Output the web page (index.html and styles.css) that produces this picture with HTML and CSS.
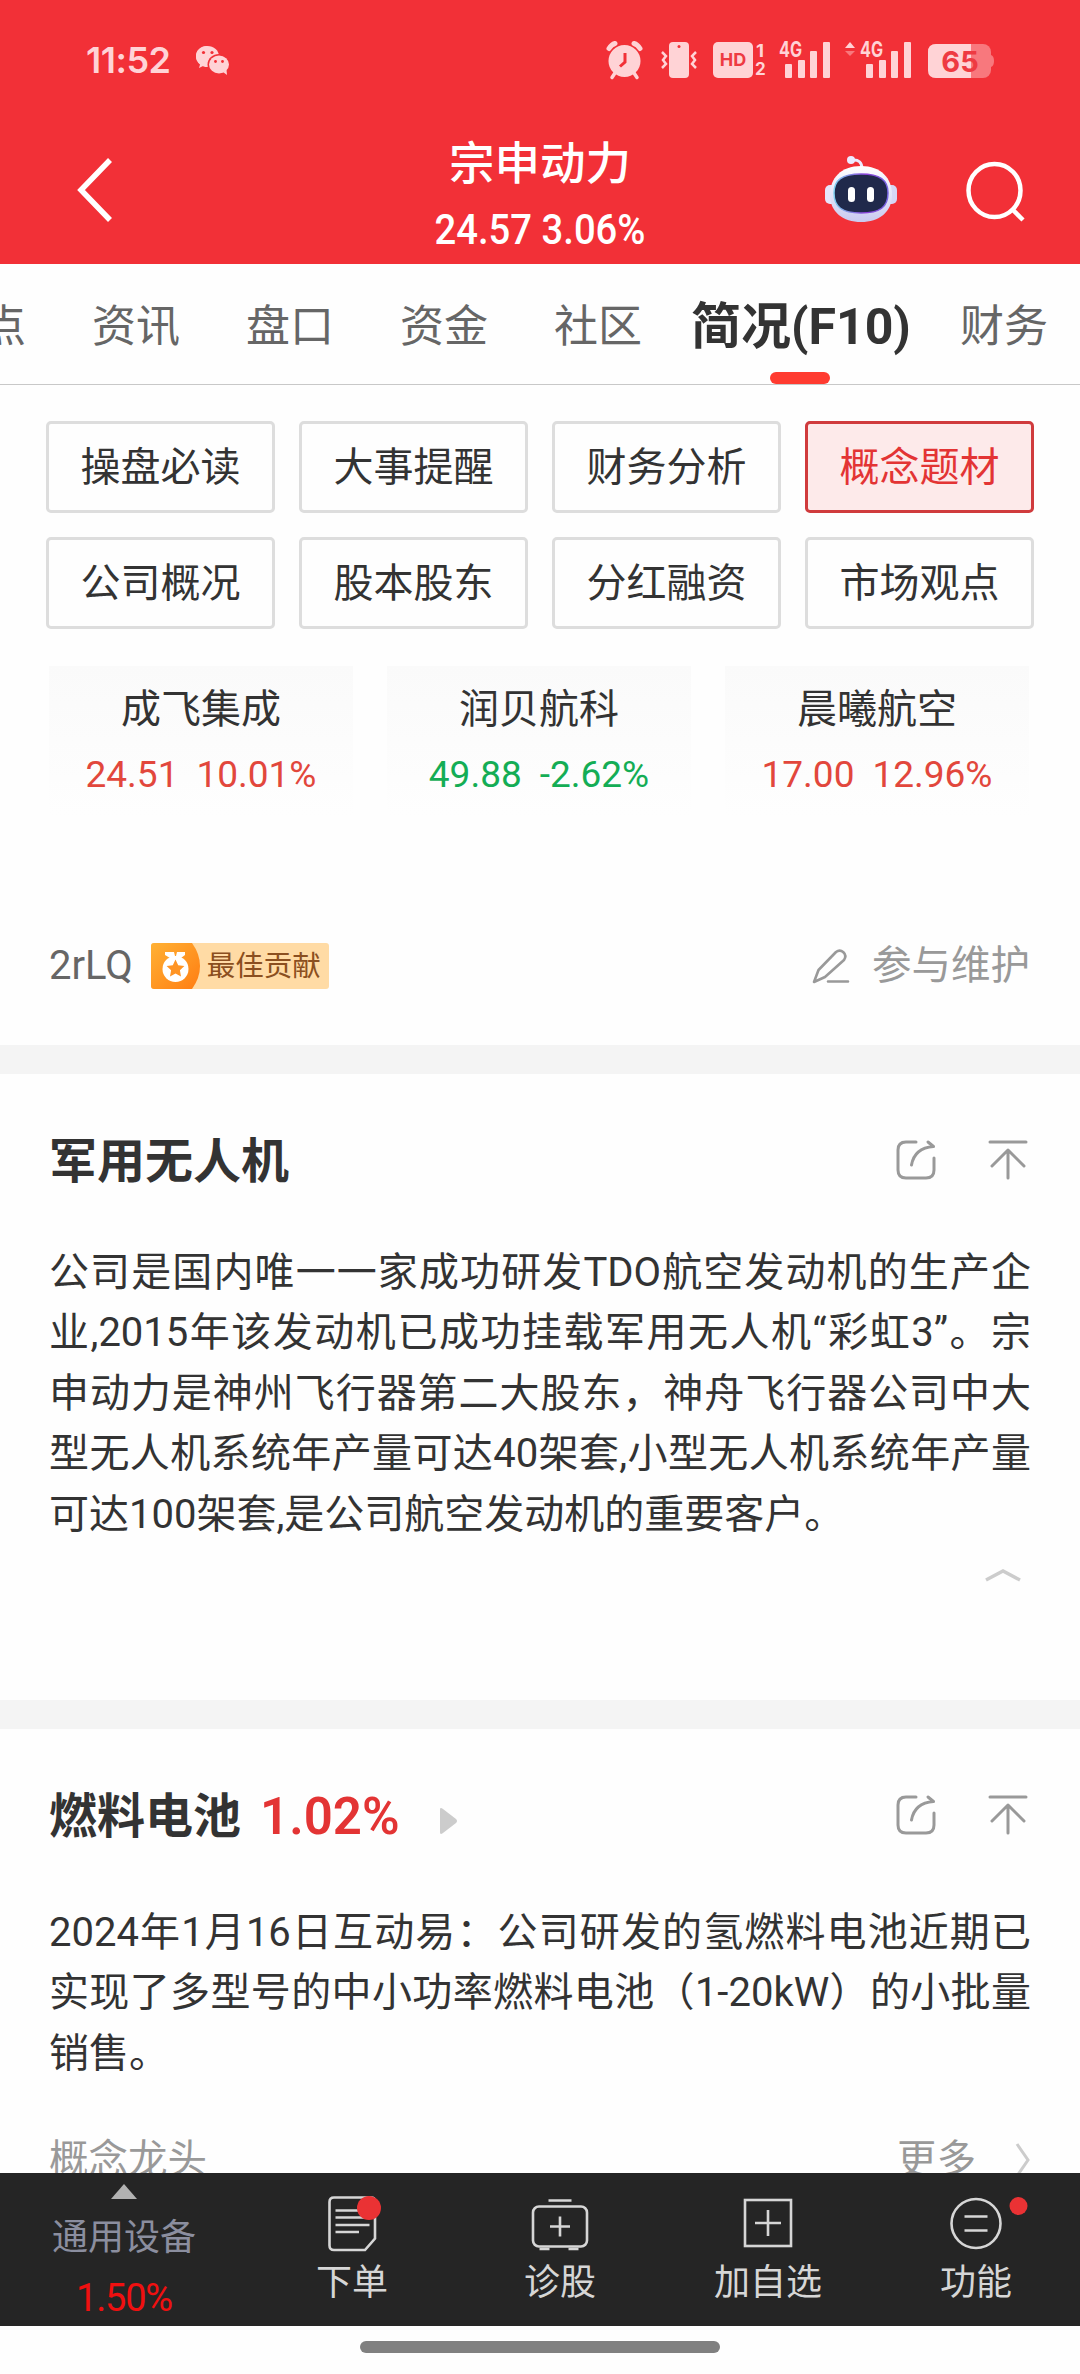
FILE: index.html
```html
<!DOCTYPE html>
<html lang="zh-CN">
<head>
    <meta charset="UTF-8">
    <meta name="viewport" content="width=device-width, initial-scale=1.0">
    <title>宗申动力 - 简况(F10)</title>
    <link rel="stylesheet" href="styles.css">
</head>
<body>
    <header>
        <div class="status-bar">
            <span class="time">11:52</span>
            <svg class="wechat" width="36" height="32" viewBox="0 0 36 32">
                <path d="M12 1C5.500 1 1 5.500 1 11c0 3.200 1.600 6 4.200 8L4 23l5-2.500 4 .7" fill="#ffd3d6"/>
                <ellipse cx="12.500" cy="11.500" rx="11.500" ry="10.500" fill="#ffd3d6"/>
                <ellipse cx="24" cy="19.500" rx="11.500" ry="10.500" fill="#f23037"/>
                <path d="M28 27l4 3-.5-5z" fill="#ffd3d6"/>
                <ellipse cx="24" cy="19.500" rx="10" ry="9" fill="#ffd3d6"/>
                <g fill="#f23037">
                    <circle cx="8.500" cy="7.500" r="1.600"/><circle cx="17" cy="7.500" r="1.600"/>
                    <circle cx="20.500" cy="16.500" r="1.400"/><circle cx="27.500" cy="16.500" r="1.400"/>
                </g>
            </svg>
            <svg class="status-icons" width="390" height="60" viewBox="606 30 390 60">
                <!-- alarm -->
                <g stroke="#ffd3d6" fill="none" stroke-linecap="round">
                    <path d="M609 48.500q2.500-4 6-5M640 48.500q-2.500-4-6-5" stroke-width="5"/>
                    <path d="M615 73l-3 4.500M634 73l3 4.500" stroke-width="3.500"/>
                </g>
                <circle cx="624.500" cy="61" r="16" fill="#ffd3d6"/>
                <path d="M625 53v9l-5 4.500" stroke="#f23037" stroke-width="3" fill="none"/>
                <!-- vibrate -->
                <rect x="669" y="42" width="20" height="36" rx="4" fill="#ffd3d6"/>
                <circle cx="679" cy="46.500" r="1.500" fill="#f23037"/>
                <path d="M662 52l4 4-3 4 3 4-4 4M696 52l-4 4 3 4-3 4 4 4" stroke="#ffd3d6" stroke-width="2.500" fill="none"/>
                <!-- hd -->
                <rect x="713" y="42" width="40" height="36" rx="5" fill="#ffd3d6"/>
                <text x="733" y="66" font-size="18" text-anchor="middle" class="on-light">HD</text>
                <text x="756" y="57" font-size="17" class="light" textLength="8" lengthAdjust="spacingAndGlyphs">1</text>
                <text x="755" y="75" font-size="17" class="light">2</text>
                <!-- signal -->
                <text x="779" y="57" font-size="21" class="light" textLength="23" lengthAdjust="spacingAndGlyphs">4G</text>
                <g fill="#ffd3d6">
                    <rect x="785" y="64" width="7" height="14" rx="1"/><rect x="798" y="60" width="7" height="18" rx="1"/>
                    <rect x="810" y="51" width="7" height="27" rx="1"/><rect x="823" y="42" width="7" height="36" rx="1"/>
                    <path d="M845 48l5-6 5 6z"/>
                </g>
                <path d="M845 51l5 5 5-5z" fill="#f8787d"/>
                <text x="860" y="57" font-size="21" class="light" textLength="23" lengthAdjust="spacingAndGlyphs">4G</text>
                <g fill="#ffd3d6">
                    <rect x="866" y="64" width="7" height="14" rx="1"/><rect x="879" y="60" width="7" height="18" rx="1"/>
                    <rect x="891" y="51" width="7" height="27" rx="1"/><rect x="904" y="42" width="7" height="36" rx="1"/>
                </g>
                <!-- battery -->
                <rect x="928" y="44" width="63" height="34" rx="8" fill="#f8787d"/>
                <path d="M991 55q3 1 3 6t-3 6z" fill="#f8787d"/>
                <path d="M971 44h-35q-8 0-8 8v18q0 8 8 8h35z" fill="#ffd3d6"/>
                <text x="960" y="72" font-size="29" text-anchor="middle" class="on-light">65</text>
            </svg>
        </div>
        <div class="title-bar">
            <svg class="back" width="40" height="68" viewBox="0 0 40 68"><path d="M35 4L6 34l29 30" fill="none" stroke="#fff" stroke-width="5.500"/></svg>
            <div class="stock">
                <h1>宗申动力</h1>
                <p>24.57 3.06%</p>
            </div>
            <svg class="robot" width="74" height="70" viewBox="0 0 74 70">
                <defs>
                    <linearGradient id="head" x1="0" y1="0" x2="0" y2="1">
                        <stop offset="0" stop-color="#fff"/><stop offset="1" stop-color="#c9caf0"/>
                    </linearGradient>
                    <linearGradient id="rim" x1="0" y1="0" x2="1" y2="0">
                        <stop offset="0" stop-color="#7fd0f0"/><stop offset=".6" stop-color="#8a3fd8"/><stop offset="1" stop-color="#7565e0"/>
                    </linearGradient>
                </defs>
                <path d="M28 6q10-1 10 9" fill="none" stroke="#eceaff" stroke-width="3"/>
                <circle cx="27" cy="6" r="4" fill="#eceaff"/>
                <rect x="1" y="31" width="12" height="19" rx="5" fill="#e6e5fb"/>
                <rect x="61" y="31" width="12" height="19" rx="5" fill="#d6d6f5"/>
                <path d="M37 12c20 0 31 12 31 29S55 68 37 68 6 58 6 41s11-29 31-29z" fill="url(#head)"/>
                <path d="M37 20c19 0 27 6 27 19 0 14-8 20-27 20s-27-6-27-20c0-13 8-19 27-19z" fill="#20294b" stroke="url(#rim)" stroke-width="1.500"/>
                <rect x="24" y="33" width="7" height="15" rx="3.500" fill="#fff"/>
                <rect x="43" y="33" width="7" height="15" rx="3.500" fill="#fff"/>
            </svg>
            <svg class="search" width="64" height="64" viewBox="0 0 64 64">
                <ellipse cx="31.500" cy="31.500" rx="26" ry="26.500" fill="none" stroke="#fff" stroke-width="4.500"/>
                <path d="M49 50l11 11" stroke="#fff" stroke-width="4.500"/>
            </svg>
        </div>
    </header>

    <nav class="tabs">
        <a>看点</a>
        <a>资讯</a>
        <a>盘口</a>
        <a>资金</a>
        <a>社区</a>
        <a class="active">简况(F10)</a>
        <a>财务</a>
    </nav>

    <main>
        <div class="menu">
            <a>操盘必读</a>
            <a>大事提醒</a>
            <a>财务分析</a>
            <a class="active">概念题材</a>
            <a>公司概况</a>
            <a>股本股东</a>
            <a>分红融资</a>
            <a>市场观点</a>
        </div>

        <div class="leaders">
            <div class="leader up">
                <h3>成飞集成</h3>
                <p><span>24.51</span><span>10.01%</span></p>
            </div>
            <div class="leader down">
                <h3>润贝航科</h3>
                <p><span>49.88</span><span>-2.62%</span></p>
            </div>
            <div class="leader up">
                <h3>晨曦航空</h3>
                <p><span>17.00</span><span>12.96%</span></p>
            </div>
        </div>

        <div class="contributor">
            <span class="user">2rLQ</span>
            <div class="badge">
                <svg width="50" height="46" viewBox="0 0 50 46">
                    <defs>
                        <linearGradient id="medal" x1="0" y1="0" x2="1" y2="1">
                            <stop offset="0" stop-color="#ffb134"/><stop offset="1" stop-color="#ff7d12"/>
                        </linearGradient>
                    </defs>
                    <path d="M0 0h41q8 11 8 23t-8 23H0z" fill="url(#medal)"/>
                    <path d="M14 9h9l1 4h1l1-4h8v3l-4 3H19l-5-3z" fill="#fff"/>
                    <circle cx="24.500" cy="26" r="13" fill="#fff"/>
                    <path d="M24.500 16.500l2.700 5.700 6.200.8-4.500 4.300 1.100 6.200-5.500-3-5.500 3 1.100-6.200-4.500-4.300 6.200-.8z" fill="#ff9424"/>
                </svg>
                <span>最佳贡献</span>
            </div>
            <div class="maintain">
                <svg width="40" height="38" viewBox="0 0 40 38" fill="none" stroke="#999" stroke-width="2.600" stroke-linecap="round" stroke-linejoin="round">
                    <path d="M3 35L7.500 23 25 5c5-4 12 2 8 8L14 30zM17 34.500h20"/>
                </svg>
                <span>参与维护</span>
            </div>
        </div>

        <section>
            <div class="section-head">
                <h2>军用无人机</h2>
                <svg class="share" width="42" height="42" viewBox="0 0 42 42"><path d="M21 3h-10q-8 0-8 8v20q0 8 8 8h20q8 0 8-8v-12M16.500 26q3-17 22-18.500M33 3l5.500 4.500" /></svg>
                <svg class="to-top" width="42" height="42" viewBox="0 0 42 42"><path d="M3 3h36M21 39V11M5 27l16-16 16 16"/></svg>
            </div>
            <p class="text">公司是国内唯一一家成功研发TDO航空发动机的生产企<br>业,2015年该发动机已成功挂载军用无人机“彩虹3”。宗<br>申动力是神州飞行器第二大股东，神舟飞行器公司中大<br>型无人机系统年产量可达40架套,小型无人机系统年产量</p>
            <p class="text last">可达100架套,是公司航空发动机的重要客户。</p>
            <svg class="collapse" width="40" height="18" viewBox="0 0 40 18"><path d="M3 14L20 5l17 9" fill="none" stroke="#ccc" stroke-width="3.500"/></svg>
        </section>

        <section>
            <div class="section-head">
                <h2>燃料电池</h2>
                <span class="change">1.02%</span>
                <svg class="play" width="18" height="26" viewBox="0 0 18 26"><path d="M0 1.500Q0-1 3 1l13 10q2 2 0 4L3 25q-3 2-3-.5z" fill="#ccc"/></svg>
                <svg class="share" width="42" height="42" viewBox="0 0 42 42"><path d="M21 3h-10q-8 0-8 8v20q0 8 8 8h20q8 0 8-8v-12M16.500 26q3-17 22-18.500M33 3l5.500 4.500" /></svg>
                <svg class="to-top" width="42" height="42" viewBox="0 0 42 42"><path d="M3 3h36M21 39V11M5 27l16-16 16 16"/></svg>
            </div>
            <p class="text">2024年1月16日互动易：公司研发的氢燃料电池近期已<br>实现了多型号的中小功率燃料电池（1-20kW）的小批量</p>
            <p class="text last">销售。</p>
            <div class="more">
                <span>概念龙头</span>
                <span class="link">更多</span>
                <svg width="16" height="36" viewBox="0 0 16 36"><path d="M2 2l11 16L2 34" fill="none" stroke="#ccc" stroke-width="3"/></svg>
            </div>
        </section>
    </main>

    <footer>
        <div class="industry">
            <svg width="26" height="15" viewBox="0 0 26 15"><path d="M13 0l13 15H0z" fill="#b2b2b2"/></svg>
            <span>通用设备</span>
            <b>1.50%</b>
        </div>
        <a>
            <svg width="60" height="60" viewBox="322 2193 60 60">
                <path d="M334 2197.500h37q4 0 4 4v37l-10 11.500h-31q-4.500 0-4.500-4.500v-43.500q0-4.500 4.500-4.500z"/>
                <path d="M335.500 2210.500h33M335.500 2217.500h33M335.500 2225h34M335.500 2232h23.500"/>
                <circle class="dot" cx="369" cy="2208" r="12"/>
            </svg>
            下单
        </a>
        <a>
            <svg width="60" height="60" viewBox="529.500 2193 60 60">
                <rect x="532.500" y="2206.500" width="54" height="40" rx="6"/>
                <path d="M548 2200.500h23M549.500 2226.500h20M559.500 2216.500v20M539 2249h10M568 2249h10"/>
            </svg>
            诊股
        </a>
        <a>
            <svg width="60" height="60" viewBox="737 2193 60 60">
                <rect x="744" y="2200" width="46" height="46"/>
                <path d="M754 2223h26M767 2210v26"/>
            </svg>
            加自选
        </a>
        <a>
            <svg width="60" height="60" viewBox="945.500 2193 60 60">
                <circle cx="975.500" cy="2223.500" r="24.500"/>
                <path d="M964 2216.500h23M964 2230.500h23"/>
                <circle class="dot" cx="1018" cy="2206" r="9"/>
            </svg>
            功能
        </a>
    </footer>
    <div class="home-bar"><i></i></div>
</body>
</html>
```
FILE: styles.css
```css
* {
    box-sizing: border-box;
}
body {
    margin: 0;
    height: 2374px;
    display: flex;
    flex-direction: column;
    overflow: hidden;
    background-color: #fefefe;
    color: #333;
    font-family: Roboto, "Noto Sans CJK SC", sans-serif;
    font-size: 40px;
}
h1, h2, h3, p {
    margin: 0;
}
svg {
    display: block;
    flex: none;
}

/* Header */
header {
    height: 264px;
    flex: none;
    background-color: #f23037;
    color: #fff;
}
.status-bar {
    display: flex;
    align-items: center;
    height: 120px;
    padding: 0 84px 0 86px;
}
.time {
    width: 109px;
    font: 600 36px/40px Inter, sans-serif;
    letter-spacing: -0.5px;
    color: #ffd3d6;
}
.wechat {
    margin-top: 2px;
}
.status-icons {
    margin-left: auto;
}
.status-icons text {
    font-family: Inter, sans-serif;
    font-weight: 700;
}
.light {
    fill: #ffd3d6;
}
.on-light {
    fill: #ee3a42;
}
.title-bar {
    display: flex;
    align-items: flex-start;
    padding: 0 53px 0 75px;
}
.back {
    margin-top: 36px;
}
.stock {
    width: 400px;
    margin-left: 225px;
    margin-right: 84px;
    margin-top: 15px;
    text-align: center;
    white-space: nowrap;
}
.stock h1 {
    font-size: 45.500px;
    line-height: 60px;
    font-weight: 500;
}
.stock p {
    font-size: 42px;
    line-height: 50px;
    margin-top: 10px;
    font-weight: 500;
    transform: scaleX(0.91);
}
.robot {
    margin-top: 34px;
}
.search {
    margin-top: 39px;
    margin-left: auto;
}

/* Tabs */
.tabs {
    display: flex;
    flex: none;
    gap: 66px;
    height: 121px;
    margin-left: -62px;
    width: 1142px;
    border-bottom: 1px solid #c8c8c8;
    overflow: hidden;
}
.tabs a {
    flex: none;
    font-size: 44px;
    line-height: 126px;
    color: #666;
}
.tabs .active {
    position: relative;
    width: 226px;
    margin: 0 -20px;
    text-align: center;
    font-size: 50px;
    font-weight: 700;
    color: #333;
    white-space: nowrap;
}
.tabs .active::after {
    content: "";
    position: absolute;
    left: 82px;
    bottom: 0;
    width: 60px;
    height: 12px;
    border-radius: 6px;
    background-color: #ff3b30;
}

/* Content */
main {
    flex: 1;
    min-height: 0;
    overflow: hidden;
}
.menu {
    display: grid;
    grid-template-columns: repeat(4, 229px);
    gap: 24px;
    padding: 36px 46px 0;
}
.menu a {
    height: 92px;
    border: 3px solid #ddd;
    border-radius: 5px;
    line-height: 87px;
    text-align: center;
}
.menu .active {
    border-color: #d03b3d;
    background-color: #fdeaea;
    color: #e33434;
}
.leaders {
    display: grid;
    grid-template-columns: repeat(3, 304px);
    gap: 34px;
    padding: 37px 49px 0;
}
.leader {
    height: 150px;
    padding-top: 14px;
    text-align: center;
    background: linear-gradient(#fafafa, #fefefe);
}
.leader h3 {
    font-size: 40px;
    font-weight: 400;
    line-height: 60px;
}
.leader p {
    display: flex;
    justify-content: center;
    gap: 18px;
    margin-top: 10px;
    font-size: 37px;
    line-height: 50px;
    color: #e2473c;
}
.leader.down p {
    color: #14ad55;
}
.contributor {
    display: flex;
    align-items: center;
    height: 70px;
    margin-top: 115px;
    padding: 0 51px 0 49px;
    font-size: 40px;
    color: #666;
}
.user {
    margin-top: -2px;
}
.badge {
    display: flex;
    align-items: center;
    width: 178px;
    height: 46px;
    margin-left: 18px;
    border-radius: 3px;
    overflow: hidden;
    background-color: #ffdba5;
    color: #8b4f20;
    font-size: 28.500px;
    line-height: 48px;
}
.badge span {
    margin-left: 6px;
    padding-top: 2px;
    white-space: nowrap;
}
.maintain {
    display: flex;
    align-items: center;
    gap: 21px;
    margin-left: auto;
    margin-right: -1px;
    color: #999;
    font-size: 39.500px;
    line-height: 60px;
}
section {
    margin-top: 44px;
    padding: 54px 49px 0;
    border-top: 29px solid #f4f4f4;
    height: 655px;
}
.section-head {
    display: flex;
    align-items: center;
    height: 64px;
}
.section-head h2 {
    margin-top: 4px;
    font-size: 48px;
    line-height: 64px;
    font-weight: 700;
}
.change {
    margin-top: 2px;
    margin-left: 19px;
    font-size: 51px;
    font-weight: 600;
    color: #e33434;
}
.play {
    margin-left: 40px;
    margin-top: 11px;
}
.share, .to-top {
    fill: none;
    stroke: #999;
    stroke-width: 3;
    stroke-linecap: round;
    stroke-linejoin: round;
}
.share {
    margin-left: auto;
}
.to-top {
    margin-left: 50px;
    margin-right: 2px;
}
.text {
    margin-top: 51px;
    line-height: 60.400px;
    white-space: nowrap;
    text-align: justify;
    text-align-last: justify;
}
.text.last {
    margin-top: 0;
    text-align-last: left;
}
.collapse {
    margin: 21px 8px 0 auto;
}
section + section {
    margin-top: 0;
}
section + section .text:not(.last) {
    margin-top: 56px;
}
.more {
    display: flex;
    align-items: center;
    margin-top: 46px;
    line-height: 60px;
    font-size: 39.500px;
    color: #999;
}
.link {
    margin-left: auto;
    margin-right: 39px;
}

/* Bottom bar */
footer {
    display: grid;
    grid-template-columns: 248px repeat(4, 208px);
    flex: none;
    height: 153px;
    background-color: #252525;
    color: #d6d6d6;
}
footer a {
    display: flex;
    flex-direction: column;
    align-items: center;
    padding-top: 20px;
    font-size: 36px;
    line-height: 54px;
}
footer a svg {
    margin-bottom: 3px;
    fill: none;
    stroke: #d6d6d6;
    stroke-width: 2.600;
    overflow: visible;
}
footer .dot {
    fill: #ea3234;
    stroke: none;
}
.industry {
    display: flex;
    flex-direction: column;
    align-items: center;
    padding-top: 11px;
    font-size: 36px;
    line-height: 54px;
    color: #8b8e9f;
}
.industry span {
    margin-top: 12px;
}
.industry b {
    margin-top: 6px;
    font-size: 38px;
    font-weight: 400;
    letter-spacing: -1.200px;
    color: #f01010;
}
.home-bar {
    flex: none;
    height: 48px;
    padding-top: 15px;
}
.home-bar i {
    display: block;
    width: 360px;
    height: 12px;
    margin: 0 auto;
    border-radius: 6px;
    background-color: #808080;
}
```
